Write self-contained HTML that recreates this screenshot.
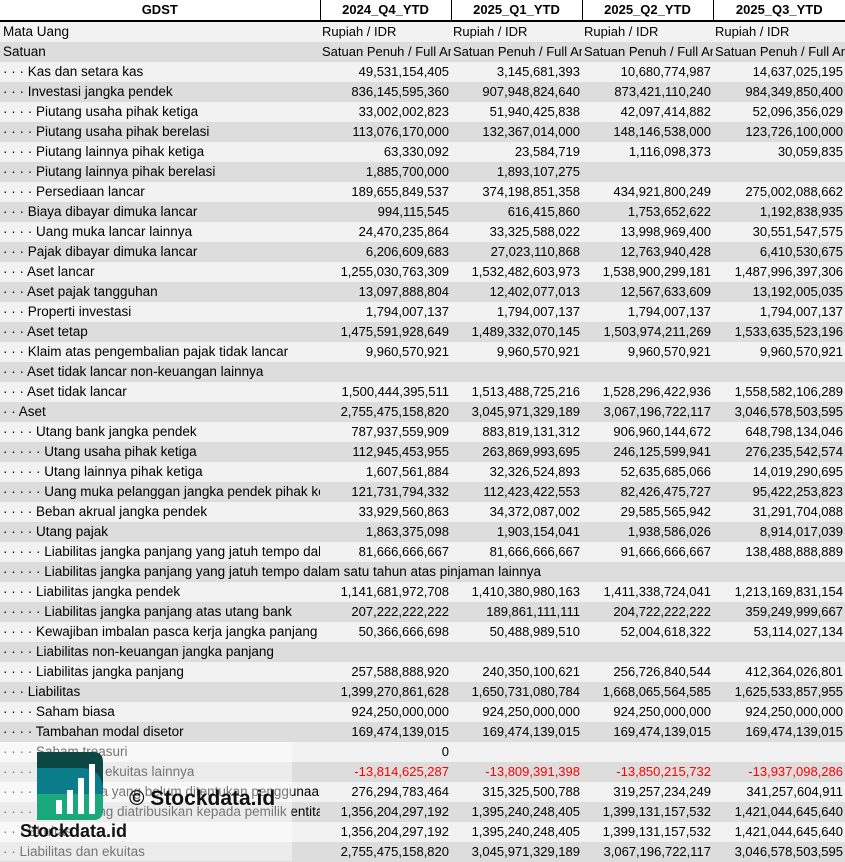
<!DOCTYPE html>
<html><head><meta charset="utf-8">
<style>
body{margin:0;width:845px;height:861px;overflow:hidden;background:#fff;font-family:"Liberation Sans",sans-serif;font-size:13px;color:#000;position:relative}
table{border-collapse:collapse;table-layout:fixed;width:845px}
td{height:20px;padding:0 2px;white-space:nowrap;overflow:hidden;line-height:20px}
tr.h td{height:19px;font-weight:bold;text-align:center;border-left:1px solid #000;border-bottom:2px solid #000;background:#fff}
tr.h td:first-child{border-left:none}
tbody tr:nth-child(odd) td{background:#f2f2f2}
tbody tr:nth-child(even) td{background:#dddddd}
td.n{text-align:right;padding-right:2px}
td.t{text-align:left;padding-left:2px}
td.l{padding-left:3px;font-size:13.5px}
.r{color:#ff0000}
.ov{position:absolute;left:0;top:742px;width:292px;height:119px;background:rgba(255,255,255,0.45)}
</style></head><body>
<table>
<colgroup><col style="width:320px"><col style="width:131px"><col style="width:131px"><col style="width:131px"><col style="width:132px"></colgroup>
<thead><tr class="h"><td>GDST</td><td>2024_Q4_YTD</td><td>2025_Q1_YTD</td><td>2025_Q2_YTD</td><td>2025_Q3_YTD</td></tr></thead>
<tbody>
<tr><td class="l">Mata Uang</td><td class="t">Rupiah / IDR</td><td class="t">Rupiah / IDR</td><td class="t">Rupiah / IDR</td><td class="t">Rupiah / IDR</td></tr>
<tr><td class="l">Satuan</td><td class="t">Satuan Penuh / Full Amount</td><td class="t">Satuan Penuh / Full Amount</td><td class="t">Satuan Penuh / Full Amount</td><td class="t">Satuan Penuh / Full Amount</td></tr>
<tr><td class="l">· · · Kas dan setara kas</td><td class="n">49,531,154,405</td><td class="n">3,145,681,393</td><td class="n">10,680,774,987</td><td class="n">14,637,025,195</td></tr>
<tr><td class="l">· · · Investasi jangka pendek</td><td class="n">836,145,595,360</td><td class="n">907,948,824,640</td><td class="n">873,421,110,240</td><td class="n">984,349,850,400</td></tr>
<tr><td class="l">· · · · Piutang usaha pihak ketiga</td><td class="n">33,002,002,823</td><td class="n">51,940,425,838</td><td class="n">42,097,414,882</td><td class="n">52,096,356,029</td></tr>
<tr><td class="l">· · · · Piutang usaha pihak berelasi</td><td class="n">113,076,170,000</td><td class="n">132,367,014,000</td><td class="n">148,146,538,000</td><td class="n">123,726,100,000</td></tr>
<tr><td class="l">· · · · Piutang lainnya pihak ketiga</td><td class="n">63,330,092</td><td class="n">23,584,719</td><td class="n">1,116,098,373</td><td class="n">30,059,835</td></tr>
<tr><td class="l">· · · · Piutang lainnya pihak berelasi</td><td class="n">1,885,700,000</td><td class="n">1,893,107,275</td><td class="n"></td><td class="n"></td></tr>
<tr><td class="l">· · · · Persediaan lancar</td><td class="n">189,655,849,537</td><td class="n">374,198,851,358</td><td class="n">434,921,800,249</td><td class="n">275,002,088,662</td></tr>
<tr><td class="l">· · · Biaya dibayar dimuka lancar</td><td class="n">994,115,545</td><td class="n">616,415,860</td><td class="n">1,753,652,622</td><td class="n">1,192,838,935</td></tr>
<tr><td class="l">· · · · Uang muka lancar lainnya</td><td class="n">24,470,235,864</td><td class="n">33,325,588,022</td><td class="n">13,998,969,400</td><td class="n">30,551,547,575</td></tr>
<tr><td class="l">· · · Pajak dibayar dimuka lancar</td><td class="n">6,206,609,683</td><td class="n">27,023,110,868</td><td class="n">12,763,940,428</td><td class="n">6,410,530,675</td></tr>
<tr><td class="l">· · · Aset lancar</td><td class="n">1,255,030,763,309</td><td class="n">1,532,482,603,973</td><td class="n">1,538,900,299,181</td><td class="n">1,487,996,397,306</td></tr>
<tr><td class="l">· · · Aset pajak tangguhan</td><td class="n">13,097,888,804</td><td class="n">12,402,077,013</td><td class="n">12,567,633,609</td><td class="n">13,192,005,035</td></tr>
<tr><td class="l">· · · Properti investasi</td><td class="n">1,794,007,137</td><td class="n">1,794,007,137</td><td class="n">1,794,007,137</td><td class="n">1,794,007,137</td></tr>
<tr><td class="l">· · · Aset tetap</td><td class="n">1,475,591,928,649</td><td class="n">1,489,332,070,145</td><td class="n">1,503,974,211,269</td><td class="n">1,533,635,523,196</td></tr>
<tr><td class="l">· · · Klaim atas pengembalian pajak tidak lancar</td><td class="n">9,960,570,921</td><td class="n">9,960,570,921</td><td class="n">9,960,570,921</td><td class="n">9,960,570,921</td></tr>
<tr><td class="l">· · · Aset tidak lancar non-keuangan lainnya</td><td class="n"></td><td class="n"></td><td class="n"></td><td class="n"></td></tr>
<tr><td class="l">· · · Aset tidak lancar</td><td class="n">1,500,444,395,511</td><td class="n">1,513,488,725,216</td><td class="n">1,528,296,422,936</td><td class="n">1,558,582,106,289</td></tr>
<tr><td class="l">· · Aset</td><td class="n">2,755,475,158,820</td><td class="n">3,045,971,329,189</td><td class="n">3,067,196,722,117</td><td class="n">3,046,578,503,595</td></tr>
<tr><td class="l">· · · · Utang bank jangka pendek</td><td class="n">787,937,559,909</td><td class="n">883,819,131,312</td><td class="n">906,960,144,672</td><td class="n">648,798,134,046</td></tr>
<tr><td class="l">· · · · · Utang usaha pihak ketiga</td><td class="n">112,945,453,955</td><td class="n">263,869,993,695</td><td class="n">246,125,599,941</td><td class="n">276,235,542,574</td></tr>
<tr><td class="l">· · · · · Utang lainnya pihak ketiga</td><td class="n">1,607,561,884</td><td class="n">32,326,524,893</td><td class="n">52,635,685,066</td><td class="n">14,019,290,695</td></tr>
<tr><td class="l">· · · · · Uang muka pelanggan jangka pendek pihak ketiga</td><td class="n">121,731,794,332</td><td class="n">112,423,422,553</td><td class="n">82,426,475,727</td><td class="n">95,422,253,823</td></tr>
<tr><td class="l">· · · · Beban akrual jangka pendek</td><td class="n">33,929,560,863</td><td class="n">34,372,087,002</td><td class="n">29,585,565,942</td><td class="n">31,291,704,088</td></tr>
<tr><td class="l">· · · · Utang pajak</td><td class="n">1,863,375,098</td><td class="n">1,903,154,041</td><td class="n">1,938,586,026</td><td class="n">8,914,017,039</td></tr>
<tr><td class="l">· · · · · Liabilitas jangka panjang yang jatuh tempo dalam satu tahun</td><td class="n">81,666,666,667</td><td class="n">81,666,666,667</td><td class="n">91,666,666,667</td><td class="n">138,488,888,889</td></tr>
<tr><td class="l" colspan="5">· · · · · Liabilitas jangka panjang yang jatuh tempo dalam satu tahun atas pinjaman lainnya</td></tr>
<tr><td class="l">· · · · Liabilitas jangka pendek</td><td class="n">1,141,681,972,708</td><td class="n">1,410,380,980,163</td><td class="n">1,411,338,724,041</td><td class="n">1,213,169,831,154</td></tr>
<tr><td class="l">· · · · · Liabilitas jangka panjang atas utang bank</td><td class="n">207,222,222,222</td><td class="n">189,861,111,111</td><td class="n">204,722,222,222</td><td class="n">359,249,999,667</td></tr>
<tr><td class="l">· · · · Kewajiban imbalan pasca kerja jangka panjang</td><td class="n">50,366,666,698</td><td class="n">50,488,989,510</td><td class="n">52,004,618,322</td><td class="n">53,114,027,134</td></tr>
<tr><td class="l">· · · · Liabilitas non-keuangan jangka panjang</td><td class="n"></td><td class="n"></td><td class="n"></td><td class="n"></td></tr>
<tr><td class="l">· · · · Liabilitas jangka panjang</td><td class="n">257,588,888,920</td><td class="n">240,350,100,621</td><td class="n">256,726,840,544</td><td class="n">412,364,026,801</td></tr>
<tr><td class="l">· · · Liabilitas</td><td class="n">1,399,270,861,628</td><td class="n">1,650,731,080,784</td><td class="n">1,668,065,564,585</td><td class="n">1,625,533,857,955</td></tr>
<tr><td class="l">· · · · Saham biasa</td><td class="n">924,250,000,000</td><td class="n">924,250,000,000</td><td class="n">924,250,000,000</td><td class="n">924,250,000,000</td></tr>
<tr><td class="l">· · · · Tambahan modal disetor</td><td class="n">169,474,139,015</td><td class="n">169,474,139,015</td><td class="n">169,474,139,015</td><td class="n">169,474,139,015</td></tr>
<tr><td class="l">· · · · Saham treasuri</td><td class="n">0</td><td class="n"></td><td class="n"></td><td class="n"></td></tr>
<tr><td class="l">· · · · Komponen ekuitas lainnya</td><td class="n r">-13,814,625,287</td><td class="n r">-13,809,391,398</td><td class="n r">-13,850,215,732</td><td class="n r">-13,937,098,286</td></tr>
<tr><td class="l">· · · · · Saldo laba yang belum ditentukan penggunaannya</td><td class="n">276,294,783,464</td><td class="n">315,325,500,788</td><td class="n">319,257,234,249</td><td class="n">341,257,604,911</td></tr>
<tr><td class="l">· · · · Ekuitas yang diatribusikan kepada pemilik entitas induk</td><td class="n">1,356,204,297,192</td><td class="n">1,395,240,248,405</td><td class="n">1,399,131,157,532</td><td class="n">1,421,044,645,640</td></tr>
<tr><td class="l">· · · Ekuitas</td><td class="n">1,356,204,297,192</td><td class="n">1,395,240,248,405</td><td class="n">1,399,131,157,532</td><td class="n">1,421,044,645,640</td></tr>
<tr><td class="l">· · Liabilitas dan ekuitas</td><td class="n">2,755,475,158,820</td><td class="n">3,045,971,329,189</td><td class="n">3,067,196,722,117</td><td class="n">3,046,578,503,595</td></tr>
</tbody></table>
<div class="ov"></div>
<svg style="position:absolute;left:37px;top:752px" width="66" height="68" viewBox="0 0 66 68">
<defs><clipPath id="c"><path d="M0 0H56Q66 0 66 10V58Q66 68 56 68H0Z"/></clipPath></defs>
<g clip-path="url(#c)">
<rect width="66" height="68" fill="#0d4743"/>
<path d="M0 16H44Q66 16 66 40V68H0Z" fill="#0a7c8a"/>
<rect y="42" width="66" height="26" fill="#19a97a"/>
</g>
<rect x="19" y="48" width="6" height="14" fill="#fff"/>
<rect x="30" y="38" width="6" height="24" fill="#fff"/>
<rect x="41" y="26" width="6" height="36" fill="#fff"/>
<rect x="52" y="12" width="6" height="50" fill="#fff"/>
</svg>
<div style="position:absolute;left:129px;top:787px;font-size:21px;font-weight:bold;color:#111">© Stockdata.id</div>
<div style="position:absolute;left:20px;top:821px;font-size:18px;font-weight:bold;color:#111">Stockdata.id</div>
</body></html>
